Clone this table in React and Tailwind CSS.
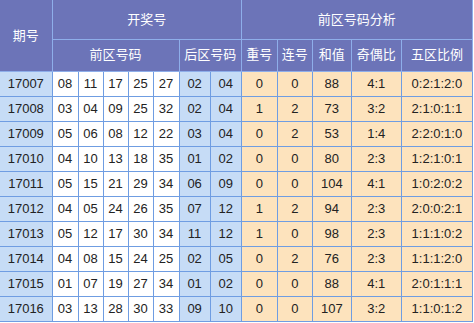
import React from "react";

const rows = [
  ["17007", ["08", "11", "17", "25", "27"], ["02", "04"], ["0", "0", "88", "4:1", "0:2:1:2:0"]],
  ["17008", ["03", "04", "09", "25", "32"], ["02", "04"], ["1", "2", "73", "3:2", "2:1:0:1:1"]],
  ["17009", ["05", "06", "08", "12", "22"], ["03", "04"], ["0", "2", "53", "1:4", "2:2:0:1:0"]],
  ["17010", ["04", "10", "13", "18", "35"], ["01", "02"], ["0", "0", "80", "2:3", "1:2:1:0:1"]],
  ["17011", ["05", "15", "21", "29", "34"], ["06", "09"], ["0", "0", "104", "4:1", "1:0:2:0:2"]],
  ["17012", ["04", "05", "24", "26", "35"], ["07", "12"], ["1", "2", "94", "2:3", "2:0:0:2:1"]],
  ["17013", ["05", "12", "17", "30", "34"], ["11", "12"], ["1", "0", "98", "2:3", "1:1:1:0:2"]],
  ["17014", ["04", "08", "15", "24", "25"], ["02", "05"], ["0", "2", "76", "2:3", "1:1:1:2:0"]],
  ["17015", ["01", "07", "19", "27", "34"], ["01", "02"], ["0", "0", "88", "4:1", "2:0:1:1:1"]],
  ["17016", ["03", "13", "28", "30", "33"], ["09", "10"], ["0", "0", "107", "3:2", "1:1:0:1:2"]],
];

const th = "border border-[#8eaeea] bg-[#6c74b8] text-white font-normal";
const td = "border border-[#6f9de2] h-[25px] p-0 text-center";

export default function App() {
  return (
    <div
      className="bg-white w-[474px] h-[323px] text-[13px] text-[#222]"
      style={{ fontFamily: '"Liberation Sans", "Noto Sans CJK SC", sans-serif' }}
    >
      <table className="border-collapse table-fixed w-[473px]">
        <colgroup>
          <col className="w-[52px]" />
          <col className="w-[26px]" />
          <col className="w-[25px]" />
          <col className="w-[25px]" />
          <col className="w-[25px]" />
          <col className="w-[26px]" />
          <col className="w-[31px]" />
          <col className="w-[31px]" />
          <col className="w-[36px]" />
          <col className="w-[35px]" />
          <col className="w-[39px]" />
          <col className="w-[50px]" />
          <col className="w-[71px]" />
        </colgroup>
        <thead>
          <tr className="h-[39px]">
            <th rowSpan={2} className={`${th} border-l-0 border-t-0`}>期号</th>
            <th colSpan={7} className={`${th} border-t-0`}>开奖号</th>
            <th colSpan={5} className={`${th} border-t-0`}>前区号码分析</th>
          </tr>
          <tr className="h-[32px]">
            <th colSpan={5} className={th}>前区号码</th>
            <th colSpan={2} className={th}>后区号码</th>
            <th className={th}>重号</th>
            <th className={th}>连号</th>
            <th className={th}>和值</th>
            <th className={th}>奇偶比</th>
            <th className={th}>五区比例</th>
          </tr>
        </thead>
        <tbody>
          {rows.map(([id, front, back, stats]) => (
            <tr key={id}>
              <td className={`${td} bg-[#c6dcf6] border-l-0`}>{id}</td>
              {front.map((n, i) => (
                <td key={i} className={`${td} bg-white`}>{n}</td>
              ))}
              {back.map((n, i) => (
                <td key={i} className={`${td} bg-[#c6dcf6]`}>{n}</td>
              ))}
              {stats.map((s, i) => (
                <td key={i} className={`${td} bg-[#fde3bd]`}>{s}</td>
              ))}
            </tr>
          ))}
        </tbody>
      </table>
    </div>
  );
}
